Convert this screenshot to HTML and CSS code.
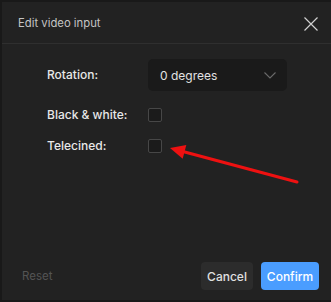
FILE: index.html
```html
<!DOCTYPE html>
<html lang="en">
<head>
  <meta charset="UTF-8">
  <title>Edit video input</title>
  <link rel="stylesheet" href="styles.css">
</head>
<body>
  <div class="dialog">
    <div class="dialog-header">
      <span class="dialog-title">Edit video input</span>
      <button class="close-btn" aria-label="Close">
        <svg width="14" height="14" viewBox="0 0 14 14"><path d="M0.5 0.5L13.5 13.5M13.5 0.5L0.5 13.5" stroke="#d0d0d0" stroke-width="1.2" fill="none"/></svg>
      </button>
    </div>

    <div class="dialog-body">
      <div class="form-grid">
        <label class="field-label">Rotation:</label>
        <div class="select">
          <span>0 degrees</span>
          <svg width="12" height="7" viewBox="0 0 12 7"><path d="M0.5 0.5L6 6L11.5 0.5" stroke="#6a6a6a" stroke-width="1.1" fill="none"/></svg>
        </div>

        <label class="field-label">Black &amp; white:</label>
        <span class="checkbox"></span>

        <label class="field-label">Telecined:</label>
        <span class="checkbox"></span>
      </div>
    </div>

    <div class="dialog-footer">
      <button class="btn-reset">Reset</button>
      <div class="footer-actions">
        <button class="btn btn-cancel">Cancel</button>
        <button class="btn btn-confirm">Confirm</button>
      </div>
    </div>
  </div>

  <!-- annotation arrow drawn over the dialog -->
  <svg class="annotation" width="331" height="302" viewBox="0 0 331 302">
    <line x1="297" y1="182" x2="181" y2="151" stroke="#ee1111" stroke-width="3" stroke-linecap="round"/>
    <polygon points="170,148 186.3,145 182.7,158.7" fill="#ee1111"/>
  </svg>
</body>
</html>
```

FILE: styles.css
```css
* {
  margin: 0;
  padding: 0;
  box-sizing: border-box;
  font-family: Inter, 'Liberation Sans', sans-serif;
}
body {
  background: #191919;
  width: 331px;
  height: 302px;
  overflow: hidden;
  position: relative;
}
.dialog {
  margin: 2px 0 2px 2px;
  height: 298px;
  background: #222222;
  display: flex;
  flex-direction: column;
}
.dialog-header {
  height: 42px;
  border-bottom: 1px solid #2f2f2f;
  display: flex;
  align-items: center;
  justify-content: space-between;
  padding: 0 12px 0 16px;
}
.dialog-title {
  font-size: 11.3px;
  color: #c4c4c4;
}
.close-btn {
  background: none;
  border: none;
  width: 16px;
  height: 16px;
  display: flex;
  align-items: center;
  justify-content: center;
  margin-top: 2px;
}
.dialog-body {
  flex: 1;
  padding: 15px 0 0 45px;
}
.form-grid {
  display: grid;
  grid-template-columns: 101px 139px;
  row-gap: 17px;
  align-items: center;
}
.field-label {
  font-size: 12px;
  line-height: 14px;
  font-weight: 500;
  color: #e8e8e8;
}
.select {
  height: 32px;
  background: #1a1a1a;
  border-radius: 5px;
  display: flex;
  align-items: center;
  justify-content: space-between;
  padding: 0 11px 0 12px;
  font-size: 12px;
  color: #e2e2e2;
}
.checkbox {
  width: 14px;
  height: 14px;
  border: 1px solid #474747;
  background: #1b1b1b;
  border-radius: 2px;
}
.dialog-footer {
  display: flex;
  align-items: center;
  justify-content: space-between;
  padding: 0 12px 10px 20px;
}
.btn-reset {
  background: none;
  border: none;
  font-size: 11.5px;
  color: #545454;
}
.footer-actions {
  display: flex;
  gap: 8px;
}
.btn {
  height: 28px;
  border: none;
  border-radius: 4px;
  font-size: 12px;
  font-weight: 500;
}
.btn-cancel {
  width: 52px;
  background: #2c2c2c;
  color: #e0e0e0;
}
.btn-confirm {
  width: 58px;
  background: #4a9dff;
  color: #ffffff;
}
.annotation {
  position: absolute;
  top: 0;
  left: 0;
  pointer-events: none;
}
```
